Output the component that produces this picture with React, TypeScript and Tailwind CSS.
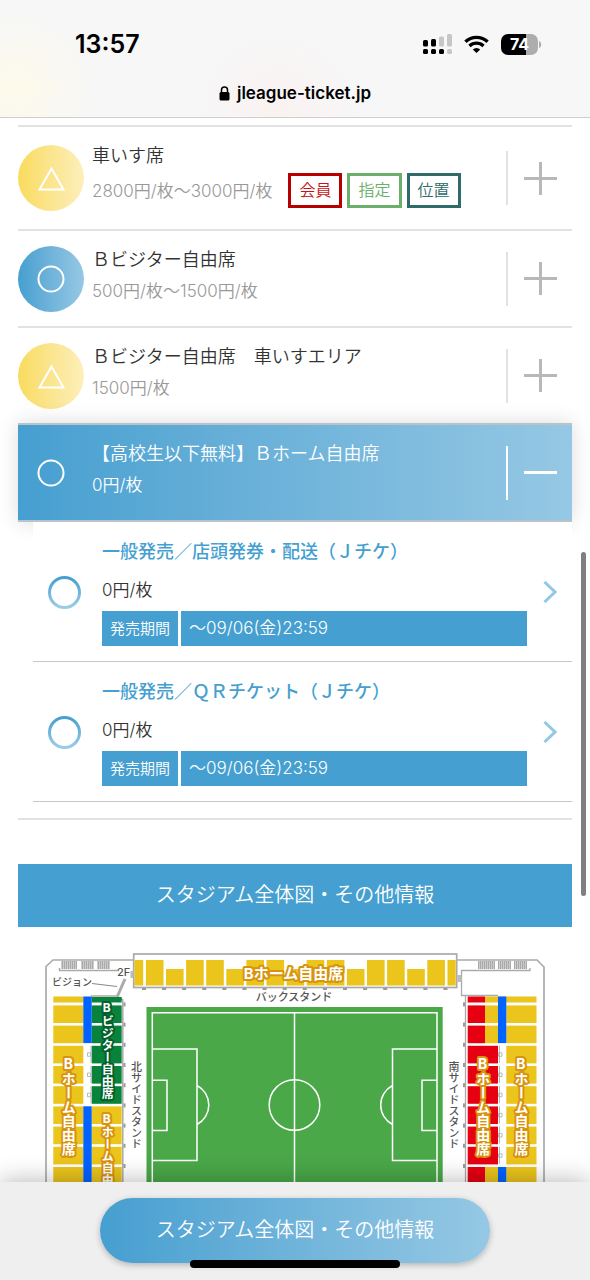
import { useState } from 'react';

type Mark = 'triangle' | 'circle';

interface Badge {
  label: string;
  style: string;
}

interface Seat {
  id: number;
  name: string;
  price: string;
  mark: Mark;
  badges: Badge[];
  tickets: { title: string; price: string; period: string }[];
}

const seats: Seat[] = [
  {
    id: 1,
    name: '車いす席',
    price: '2800円/枚〜3000円/枚',
    mark: 'triangle',
    badges: [
      { label: '会員', style: 'border-[#b90000] text-[#c81414]' },
      { label: '指定', style: 'border-[#6aaf6a] text-[#6aaf6a]' },
      { label: '位置', style: 'border-[#2f6b68] text-[#2f6b68]' }
    ],
    tickets: []
  },
  { id: 2, name: 'Ｂビジター自由席', price: '500円/枚〜1500円/枚', mark: 'circle', badges: [], tickets: [] },
  { id: 3, name: 'Ｂビジター自由席　車いすエリア', price: '1500円/枚', mark: 'triangle', badges: [], tickets: [] },
  {
    id: 4,
    name: '【高校生以下無料】Ｂホーム自由席',
    price: '0円/枚',
    mark: 'circle',
    badges: [],
    tickets: [
      { title: '一般発売／店頭発券・配送（Ｊチケ）', price: '0円/枚', period: '〜09/06(金)23:59' },
      { title: '一般発売／ＱＲチケット（Ｊチケ）', price: '0円/枚', period: '〜09/06(金)23:59' }
    ]
  }
];

const StatusBar = () => (
  <div className="flex items-center justify-between pl-[75px] pr-12 pt-[28px]">
    <span className="text-[25px] leading-[32px] font-semibold text-black">13:57</span>
    <div className="flex items-center gap-3">
      <svg width="29" height="20" viewBox="0 0 29 20" aria-hidden="true">
        <g fill="#000">
          <rect x="0" y="6" width="5" height="6.5" rx="1.5" />
          <rect x="8" y="5" width="5" height="7.5" rx="1.5" />
          <rect x="0" y="15" width="5" height="5" rx="1.5" />
          <rect x="8" y="15" width="5" height="5" rx="1.5" />
          <rect x="16" y="15" width="5" height="5" rx="1.5" />
        </g>
        <g fill="#c6c6c6">
          <rect x="16" y="2.5" width="5" height="10" rx="1.5" />
          <rect x="24" y="0" width="5" height="12.5" rx="1.5" />
          <rect x="24" y="15" width="5" height="5" rx="1.5" />
        </g>
      </svg>
      <svg width="25" height="18" viewBox="0 0 25 18" fill="none" stroke="#000" strokeWidth="3.3" aria-hidden="true">
        <path d="M1.4 6.8a16 16 0 0 1 22.2 0" />
        <path d="M5.5 11a10 10 0 0 1 14 0" />
        <path d="M8.8 14.4a5.3 5.3 0 0 1 7.4 0L12.5 18z" fill="#000" stroke="none" />
      </svg>
      <div className="flex items-center">
        <div className="flex h-[21px] w-[37px] items-center justify-center rounded-[7px] bg-[linear-gradient(90deg,#000_68%,#adadad_68%)]">
          <span className="text-[16px] leading-[21px] font-bold text-white">74</span>
        </div>
        <svg className="ml-px" width="3" height="7" viewBox="0 0 3 7" aria-hidden="true">
          <path d="M0 0c3 1 3 6 0 7z" fill="#adadad" />
        </svg>
      </div>
    </div>
  </div>
);

const MarkIcon = ({ mark, open }: { mark: Mark; open: boolean }) => {
  const fill = mark === 'triangle' ? 'bg-linear-to-r from-[#f9db5c] to-[#fdefb9]' : 'bg-linear-to-r from-[#459fd0] to-[#95c8e4]';
  return (
    <span className={`size-[66px] shrink-0 rounded-full ${open ? '' : fill}`}>
      <svg viewBox="0 0 66 66" fill="none" stroke="#fff" strokeWidth="2" aria-hidden="true">
        {mark === 'triangle' ? <path d="M33.5 23.5L45.500 44.500H21.500z" /> : <circle cx="33" cy="33" r="12.5" />}
      </svg>
    </span>
  );
};

const TicketLink = ({ title, price, period }: Seat['tickets'][number]) => (
  <a href="#ticket" className="flex items-center border-b border-[#c4c8ca] pt-4 pb-[15px] pl-[15px]">
    <svg className="mr-[21px] shrink-0" width="33" height="33" viewBox="0 0 33 33" fill="none" aria-hidden="true">
      <defs>
        <linearGradient id="ring" x1="0" y1="0" x2="0" y2="1">
          <stop offset="0" stopColor="#459fd0" />
          <stop offset="1" stopColor="#9bcce6" />
        </linearGradient>
      </defs>
      <circle cx="16.5" cy="16.5" r="15" stroke="url(#ring)" strokeWidth="3" />
    </svg>
    <div className="min-w-0 flex-1">
      <h3 className="text-[18px] leading-[28px] font-medium text-[#459fd0]">{title}</h3>
      <p className="mt-2 text-[17px] leading-[32px] font-[350] text-[#333]">{price}</p>
      <dl className="mt-[5px] flex gap-[3px] font-[350] text-white">
        <dt className="bg-[#459fd0] px-2 text-[15px] leading-[35px]">発売期間</dt>
        <dd className="flex-1 bg-[#459fd0] px-2 text-[17px] leading-[35px]">{period}</dd>
      </dl>
    </div>
    <span className="flex w-[45px] shrink-0 justify-center">
      <svg width="14" height="22" viewBox="0 0 14 22" fill="none" stroke="#92c8e6" strokeWidth="3" aria-hidden="true">
        <path d="M1.5 1L12 11L1.5 21" />
      </svg>
    </span>
  </a>
);

const SeatRow = ({ seat, open, onToggle }: { seat: Seat; open: boolean; onToggle: () => void }) => (
  <li>
    <button
      type="button"
      aria-expanded={open}
      onClick={onToggle}
      className={`relative flex w-full items-center border-t-2 py-[13px] text-left ${
        open
          ? 'border-b-2 border-[#b9c3c9] bg-linear-to-r from-[#459fd0] to-[#95c8e4] bg-origin-border shadow-[0_0_20px_rgba(0,0,0,0.14)]'
          : 'border-[#e2e2e2]'
      }`}
    >
      <MarkIcon mark={seat.mark} open={open} />
      <span className="ml-2 min-w-0 flex-1 pt-px pb-[6px]">
        <span className={`block text-[18px] leading-[30px] font-[350] ${open ? 'text-white' : 'text-[#333]'}`}>{seat.name}</span>
        <span className="flex items-center">
          <span className={`text-[17px] leading-[32px] font-[350] ${open ? 'text-white' : 'text-[#999]'}`}>{seat.price}</span>
          {seat.badges.length > 0 && (
            <span className="my-[2px] ml-4 flex gap-[5px]">
              {seat.badges.map(badge => (
                <span key={badge.label} className={`border-3 bg-white px-2 text-[16px] leading-[29px] font-[350] ${badge.style}`}>
                  {badge.label}
                </span>
              ))}
            </span>
          )}
        </span>
      </span>
      <span className={`flex h-[54px] w-[66px] shrink-0 items-center justify-center border-l-2 ${open ? 'border-white' : 'border-[#e2e2e2]'}`}>
        <svg width="33" height="33" viewBox="0 0 33 33" fill="none" stroke={open ? '#fff' : '#b8b8b8'} strokeWidth="3" aria-hidden="true">
          <path d={open ? 'M0 16.5H33' : 'M0 16.5H33M16.5 0V33'} />
        </svg>
      </span>
    </button>
    {open && (
      <div className="relative ml-[15px] bg-white">
        {seat.tickets.map(ticket => (
          <TicketLink key={ticket.title} {...ticket} />
        ))}
      </div>
    )}
  </li>
);

const YELLOW = '#ebc41c';
const GREEN = '#07833c';
const RED = '#e60012';
const BLUE = '#0062ff';

const SideLabel = ({ x, y, size, halo, children }: { x: number; y: number; size: number; halo: string; children: string }) => (
  <text
    x={x}
    y={y}
    fontSize={size}
    fontWeight="700"
    fill="#fff"
    stroke={halo}
    strokeWidth="4"
    strokeLinejoin="round"
    paintOrder="stroke"
    className="[writing-mode:vertical-rl] [text-orientation:upright]"
  >
    {children}
  </text>
);

const StadiumMap = () => {
  const blocks = Array.from({ length: 15 }, (_, i) => i);
  const rows = Array.from({ length: 12 }, (_, i) => ({ i, y: 1005.4 + i * 20.2 }));
  const hatches = [[61, 77], [81, 94], [97, 110], [478, 495], [498, 511], [514, 527]];

  return (
    <svg viewBox="18 944 554 300" className="block w-full" role="img" aria-label="スタジアム全体図">
      <defs>
        <pattern id="hatch" width="2" height="4" patternUnits="userSpaceOnUse">
          <rect width="2" height="4" fill="#ccc" />
          <rect width="1" height="4" fill="#aaa" />
        </pattern>
      </defs>

      {/* Outer walls */}
      <g fill="none" stroke="#aaa" strokeWidth="1.7">
        <path d="M46 1244V966.5L53 960H134" />
        <path d="M457 960H537L544 967V1244" />
        <path d="M59.5 968V970.5H119" strokeWidth="1.5" />
        <path d="M530 968V970.5H461.5V995.5H498M465.5 995V1244" strokeWidth="1.3" />
        <path d="M91 996H117L122.8 1000V1244" strokeWidth="1.5" />
        <path d="M92 983.5L117 986.5" strokeWidth="1" stroke="#888" />
        <path d="M125 979L117.5 996" strokeWidth="3" />
        <rect x="133.7" y="954" width="323" height="33.5" fill="#fff" />
      </g>
      {hatches.map(([from, to]) => (
        <rect key={from} x={from} y="961" width={to - from} height="8" fill="url(#hatch)" />
      ))}
      <rect x="457.5" y="975" width="4" height="7" fill="#bbb" />
      <rect x="130.5" y="971" width="3" height="7" fill="#bbb" />

      {/* Back stand */}
      <rect x="134.5" y="960" width="8.7" height="25.5" fill={YELLOW} />
      {blocks.map(i => {
        const short = i % 3 === 1;
        return (
          <rect key={i} x={145.9 + i * 20.1} y={short ? 969 : 960} width="17.6" height={short ? 16.5 : 25.5} fill={YELLOW} />
        );
      })}
      <rect x="447.5" y="960" width="8.2" height="25.5" fill={YELLOW} />
      {[...blocks, 15].map(i => (
        <rect key={i} x={142 + i * 20.1} y="988" width="4" height="2" fill="#999" />
      ))}

      {/* Side stands */}
      <rect x="53.3" y="996.5" width="30" height="6" fill={YELLOW} />
      <rect x="91.7" y="997" width="30" height="5.5" fill={GREEN} />
      <rect x="467.7" y="996.5" width="17.3" height="6" fill={RED} />
      <rect x="485" y="996.5" width="51.5" height="6" fill={YELLOW} />
      {rows.map(({ i, y }) => {
        const split = i < 2 || i > 7;
        return (
          <g key={i}>
            <rect x="53.3" y={y} width="30" height="17.6" fill={YELLOW} />
            <rect x="91.7" y={y} width="30" height="17.6" fill={i < 5 ? GREEN : YELLOW} />
            <rect x="467.7" y={y} width={split ? 17.3 : 30.3} height="17.6" fill={RED} />
            {split && <rect x="485" y={y} width="14" height="17.6" fill={YELLOW} />}
            <rect x="506.3" y={y} width="30.2" height="17.6" fill={YELLOW} />
            <rect x="123.5" y={y - 3} width="2" height="4" fill="#999" />
            <rect x="463" y={y - 3} width="2" height="4" fill="#999" />
            {i > 1 && i < 5 && <path d={`M91 ${y}v17M87.5 ${y + 7}h3v3.5h-3z`} fill="none" stroke="#aaa" strokeWidth="0.8" />}
            {i > 1 && i < 8 && <path d={`M499.5 ${y}v17M498.5 ${y + 7}h3.5v3.5h-3.5z`} fill="none" stroke="#aaa" strokeWidth="0.8" />}
          </g>
        );
      })}
      <g fill={BLUE}>
        <rect x="83.3" y="996.5" width="8.4" height="46.6" />
        <rect x="83.3" y="1106.3" width="8.4" height="138" />
        <rect x="498" y="996.5" width="8.3" height="46.6" />
        <rect x="498" y="1167" width="8.3" height="77" />
      </g>

      {/* Pitch */}
      <rect x="146.5" y="1007" width="296.2" height="237" fill="#4aa849" />
      <g fill="none" stroke="#fff" strokeWidth="1.5">
        <path d="M152.3 1244V1012.8H437V1244M294.5 1012.8V1244" />
        <circle cx="294.5" cy="1105" r="25.3" />
        <path d="M152.3 1049H197V1160.5H152.3M152.3 1080.3H167V1130.5H152.3M197 1085.5A22 22 0 0 1 197 1124.5" />
        <path d="M437 1049H392.5V1160.5H437M437 1080.3H422V1130.5H437M392.5 1085.5A22 22 0 0 0 392.5 1124.5" />
      </g>

      {/* Labels */}
      <g fill="#555" fontSize="11" fontWeight="500">
        <text x="294" y="1001" textAnchor="middle">バックスタンド</text>
        <text x="52" y="986" fontSize="10">ビジョン</text>
        <text x="117" y="976">2F</text>
        <text x="135.5" y="1061" className="[writing-mode:vertical-rl]">北サイドスタンド</text>
        <text x="453" y="1061" className="[writing-mode:vertical-rl]">南サイドスタンド</text>
      </g>
      <text x="293.5" y="979" fontSize="15" fontWeight="700" textAnchor="middle" fill="#fff" stroke="#d8930f" strokeWidth="4" strokeLinejoin="round" paintOrder="stroke">
        Bホーム自由席
      </text>
      <SideLabel x={68.3} y={1055} size={14} halo="#d8930f">Bホーム自由席</SideLabel>
      <SideLabel x={106.7} y={1000} size={12} halo="#04602b">Bビジター自由席</SideLabel>
      <SideLabel x={106.7} y={1111} size={12} halo="#d8930f">Bホーム自由席</SideLabel>
      <SideLabel x={482.7} y={1055} size={14} halo="#d8930f">Bホーム自由席</SideLabel>
      <SideLabel x={521} y={1055} size={14} halo="#d8930f">Bホーム自由席</SideLabel>
    </svg>
  );
};

const App = () => {
  const [openId, setOpenId] = useState<number | null>(4);

  return (
    <div className="relative flex h-screen flex-col overflow-hidden bg-white font-['Inter','Noto_Sans_CJK_JP',sans-serif]">
      <header className="shrink-0 border-b border-[#cfcfcf] bg-[#f7f7f7] bg-[radial-gradient(circle_at_3%_75%,#fdfaea_0,transparent_75px),radial-gradient(circle_at_47%_95%,#faf2f1_0,transparent_80px)] pb-[11px]">
        <StatusBar />
        <div className="mt-[20px] flex items-center justify-center gap-[7px]">
          <svg width="11" height="15" viewBox="0 0 11 15" aria-hidden="true">
            <rect x="0.5" y="6" width="10" height="8.5" rx="1.5" fill="#000" />
            <path d="M2.5 7V4a3 3 0 0 1 6 0V7" fill="none" stroke="#000" strokeWidth="1.5" />
          </svg>
          <span className="text-[17px] leading-[26px] font-semibold text-black">jleague-ticket.jp</span>
        </div>
      </header>

      <main className="min-h-0 flex-1 overflow-y-auto px-[18px] pt-[7px] [scrollbar-width:none]">
        <ul className="border-b-2 border-[#e2e2e2] pb-4">
          {seats.map(seat => (
            <SeatRow
              key={seat.id}
              seat={seat}
              open={openId === seat.id}
              onToggle={() => setOpenId(openId === seat.id ? null : seat.id)}
            />
          ))}
        </ul>
        <h2 className="mt-11 mb-[17px] bg-[#459fd0] text-center text-[20px] leading-[63px] font-[350] text-white">
          スタジアム全体図・その他情報
        </h2>
        <StadiumMap />
      </main>

      {/* Scroll indicator */}
      <div className="absolute top-[552px] right-1 h-[344px] w-[5px] rounded-full bg-[#7f7f7f]" />

      <footer className="relative shrink-0 bg-[#efefef] px-[100px] pt-4 pb-[17px] shadow-[0_0_24px_rgba(0,0,0,0.3)]">
        <button
          type="button"
          className="w-full rounded-full bg-linear-to-r from-[#459fd0] to-[#95c8e4] text-center text-[20px] leading-[65px] font-[350] whitespace-nowrap text-white shadow-[0_2px_6px_rgba(0,0,0,0.25)]"
        >
          スタジアム全体図・その他情報
        </button>
        <div className="absolute inset-x-[190px] bottom-3 h-2 rounded-full bg-black" />
      </footer>
    </div>
  );
};

export default App;
